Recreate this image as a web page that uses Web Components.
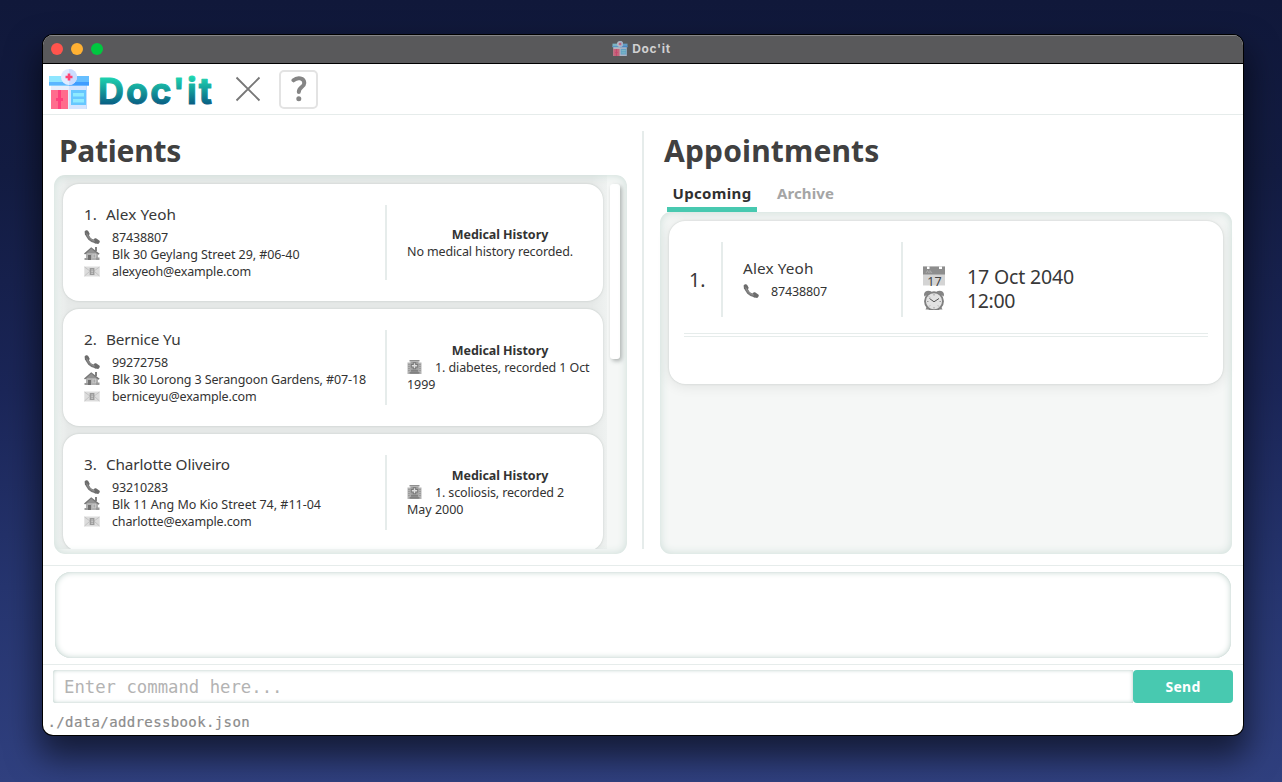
<!DOCTYPE html>
<html lang="en"><head><meta charset="utf-8"><title>Doc'it</title>
<style>
html,body{margin:0;height:100%}
body{box-sizing:border-box;width:1282px;height:782px;overflow:hidden;padding:35px 39px 47px 43px;background:linear-gradient(#10183a 0%,#131c42 22%,#1b2658 50%,#26356f 75%,#30407f 100%);font-family:"Noto Sans","Open Sans",sans-serif;color:#383838}
</style></head><body>
<docit-window></docit-window>
<script>
const define=(name,html,setup)=>{
  const t=document.createElement('template');t.innerHTML=html;
  customElements.define(name,class extends HTMLElement{
    constructor(){super();this.attachShadow({mode:'open'}).append(t.content.cloneNode(true));}
    connectedCallback(){if(setup)setup(this,this.shadowRoot);}
  });
};

// Single line of text tracked to an exact width.
define('fit-text',`<style>:host{display:inline-block;white-space:pre}</style><slot></slot>`,el=>{
  const w=+el.getAttribute('w');
  el.style.letterSpacing='0px';
  const n=[...el.textContent].length,nat=el.getBoundingClientRect().width;
  if(w&&nat)el.style.letterSpacing=((w-nat)/n).toFixed(4)+'px';
});

const icons={
 logo:`<svg viewBox="0 0 40 40"><path fill="#c5dcff" d="M2 10h36v30H20V20z"/><path fill="#e8eefb" d="M2 14h18v26H2z"/><path fill="#d4e4ff" d="M20 14h17v26H20z"/><path fill="#8ee6ff" d="M0 7h20v9.500H0z"/><path fill="#66bfff" d="M20 7h20v9.500H20z"/><path fill="#5bb6ff" d="M0 13h20v3.500H0z"/><path fill="#3f9dff" d="M20 13h20v3.500H20z"/><path fill="#ff6c8d" d="M2 21h17v19H2z"/><path fill="#ff3f7c" d="M9 21h3v19H9zM7 29h7v3H7z"/><path fill="#67c7ff" d="M22 21h15v15H22z"/><path fill="#8eeaff" d="M24 24h11v3.500H24zM24 30h11v3.500H24z"/><circle cx="20" cy="8" r="8" fill="#e1ebff"/><path fill="#cbdcff" d="M20 0a8 8 0 0 1 0 16z"/><path fill="#ff4474" d="M18.700 4.500h2.600v2.200h2.200v2.600h-2.200v2.200h-2.600V9.300h-2.200V6.700h2.200z"/></svg>`,
 phone:`<svg viewBox="0 0 16 14"><path d="M2.600 2.600C3 7 6.500 11 12.300 12" fill="none" stroke="#777" stroke-width="3.200"/><path fill="#6c6c6c" d="M.6 1.600C1.500.3 3.200-.1 4.200.9l1.400 2.600c.2 1-.8 2-2.200 2.200L1 5zM9.400 9.800c.6-1.300 2-1.800 3-1.300l3.200 2.300c.5 1-.1 2.600-1.500 3.100l-3.500-.6z"/><path d="M2.700 3.500C4 7.500 7 10 11 11.200" fill="none" stroke="#999" stroke-width=".8"/></svg>`,
 home:`<svg viewBox="0 0 16 14"><path fill="#808080" d="M11 0h2v4h-2z"/><path fill="#b0b0b0" d="M2 6L8 2l6 4.500V13H2z"/><path fill="#777" d="M7.200.3L0 6.400l1 1L7.500 3l7 4.700 1.200-.9z"/><path fill="#929292" d="M7.200 1.500L3 6h9z"/><path fill="#707070" d="M4 8h3v5H4z"/><path fill="#e0e0e0" d="M8.500 7.500h3.500V10.500H8.500z"/><path stroke="#777" stroke-width=".5" d="M10.200 7.500v3M8.500 9H12"/><path fill="#999" d="M.5 11h3.500V13H.5zM12 10.500h3.500v2.500h-3.500z"/></svg>`,
 mail:`<svg viewBox="0 0 16 11"><path fill="#dcdcdc" d="M.3.500h15.400v10H.3z"/><path fill="none" stroke="#bcbcbc" stroke-width=".8" d="M.5 1L8 6.500 15.500 1M.5 10L5.500 5.500M15.500 10l-5-4.500"/><path fill="#9a9a9a" d="M5.700 2h4.700v7H5.700z"/><path stroke="#ddd" stroke-width=".8" d="M7.200 4h2M7.200 5.700h2M7.200 7.300h2"/></svg>`,
 hospital:`<svg viewBox="0 0 15 14"><path fill="#b2b2b2" d="M.5 2.500h14V14H.5z"/><path fill="#909090" d="M2.500 0h10v1.500h-10z"/><path fill="#a0a0a0" d="M3.500 1.500h8V14h-8z"/><path fill="#777" d="M5.800 2.300h3.400v1.700h2v3.400h-2v1.800H5.800V7.400h-2V4h2z"/><path fill="#ddd" d="M6.800 3.200h1.400v1.800h2v1.400h-2v1.800H6.800V6.400h-2V5h2z"/><path fill="#777" d="M4 10.200h7v1.200H4zM2.500 12.300h10v1.200h-10z"/><path stroke="#858585" stroke-dasharray="1 1" d="M2 4v7M13 4v7"/></svg>`,
 calendar:`<svg viewBox="0 0 22 19"><path fill="#d4d4d4" d="M0 0h22v19H0z"/><path fill="#8d8d8d" d="M0 0h22v8H0z"/><path fill="#fff" d="M4 0h2.500v2.500H4zM16 0h3v2.500h-3z"/><path fill="none" stroke="#b1b1b1" stroke-width=".8" d="M3 6.500L4.500 4 6 6.500M7 6.500V4l2 2.500"/><text x="11.500" y="19" text-anchor="middle" font-family="Noto Sans,sans-serif" font-size="12.500" fill="#444">17</text></svg>`,
 clock:`<svg viewBox="0 0 22 19"><path fill="#858585" d="M1.500 6C-.5 2 4-1.500 8.500 1zM20.500 6c2-4-2.500-7.500-7-5z"/><path fill="#888" d="M4 16l-1.500 3h3zM18 16l1.500 3h-3z"/><circle cx="11" cy="10.800" r="9" fill="#e2e2e2" stroke="#808080" stroke-width="1.900"/><path fill="none" stroke="#555" stroke-width="1" d="M6.500 8L11 11.300 16 8"/><path stroke="#888" stroke-width=".8" d="M11 3.500V5M11 16.500V18M4 11h1.500M16.500 11H18M6 6l1 1M16 16l-1-1M6 16l1-1"/></svg>`,
 close:`<svg viewBox="0 0 26 26"><path fill="none" stroke="#777" stroke-width="1.900" d="M1.500 1.500l23 23M24.500 1.500l-23 23"/></svg>`,
 help:`<svg viewBox="0 0 18 26"><path fill="none" stroke="#858585" stroke-width="4" stroke-linecap="round" d="M3.500 4.300C7.500.8 14.300 1.800 14.300 7 14.300 11.200 8.800 11 8.800 16"/><circle cx="8.800" cy="22.800" r="2.500" fill="#858585"/></svg>`
};
define('ui-icon',`<style>:host{display:block;flex:none}div,svg{display:block;width:100%;height:100%;overflow:hidden}</style><div></div>`,(el,r)=>{r.querySelector('div').innerHTML=icons[el.getAttribute('name')];});

define('title-bar',`<style>
:host{display:grid;grid-template-columns:1fr auto 1fr;align-items:center;height:28px;background:#59595b;border-bottom:1px solid #000;box-sizing:content-box;box-shadow:inset 0 1px #858587}
.dots{display:flex;gap:8px;padding-left:8px}i{width:12px;height:12px;border-radius:50%}
.t{display:flex;align-items:center;gap:4px;font:bold 12px/16px Inter,sans-serif;color:#d0d0d1;padding:0 3px 1px 0}ui-icon{width:16px;height:15px;opacity:.65}
</style><div class="dots"><i style="background:#ff544d"></i><i style="background:#ffb133"></i><i style="background:#00c840"></i></div><div class="t"><ui-icon name="logo"></ui-icon><fit-text w="38.5">Doc'it</fit-text></div>`);

define('app-header',`<style>
:host{display:flex;align-items:center;height:50px;border-bottom:1px solid #e6eceb;padding-left:6px}
.logo{width:40px;height:40px}.word{width:120px;height:46px;margin-left:6px}.word svg{display:block;overflow:visible}
.x{width:26px;height:26px;margin-left:20px}
.q{border:2px solid #e3e3e3;border-radius:5px;margin-left:18px;box-sizing:border-box;width:39px;height:39px;display:grid;place-items:center}
.q ui-icon{width:18px;height:26px}
</style><ui-icon class="logo" name="logo"></ui-icon><div class="word"><svg width="120" height="46"><defs><linearGradient id="g" gradientUnits="userSpaceOnUse" x1="0" y1="9" x2="0" y2="39"><stop offset="0" stop-color="#20deb3"/><stop offset="1" stop-color="#085b82"/></linearGradient></defs><text x="3" y="38" textLength="114" lengthAdjust="spacing" font-family="Inter,sans-serif" font-weight="700" font-size="36" fill="url(#g)" stroke="url(#g)" stroke-width="1" stroke-linejoin="round">Doc'it</text></svg></div>
<ui-icon class="x" name="close"></ui-icon><div class="q"><ui-icon name="help"></ui-icon></div>`);

define('info-row',`<style>
:host{display:flex;align-items:center;height:17px;font-size:12.5px;line-height:17px;color:#333}
.i{width:28px;flex:none}ui-icon{width:16px;height:14px;margin-bottom:2px}ui-icon[name=mail]{height:11px;margin-bottom:0}
</style><div class="i"></div><slot></slot>`,(el,r)=>{r.querySelector('.i').innerHTML=`<ui-icon name="${el.getAttribute('icon')}"></ui-icon>`;});

define('patient-card',`<style>
:host{display:flex;box-sizing:border-box;height:117px;flex:none;padding:21px 10px 21px 21px;background:#fff;border-radius:16px;box-shadow:0 0 2px rgba(60,80,75,.22),0 1px 8px rgba(0,0,0,.03)}
.l{width:301px;height:75px;border-right:2px solid #e6eceb}
.r{flex:1;height:75px;padding-left:20px;display:flex;flex-direction:column;justify-content:center;font-size:12.5px;line-height:17px;color:#333}
</style><div class="l"><slot></slot></div><div class="r"><slot name="history"></slot></div>`);

define('patient-list',`<style>
:host{position:relative;display:flex;gap:3px;box-sizing:border-box;height:379px;border-radius:11px;background:#f5f7f6;overflow:hidden}
:host::after{content:"";position:absolute;inset:0;border-radius:11px;box-shadow:inset 0 0 10px #cbdcd7;clip-path:polygon(0 0,100% 0,100% 100%,0 100%,0 370px,549px 370px,549px 9px,9px 9px,9px 370px,0 370px)}
.list{box-sizing:border-box;width:553px;padding:9px 0 0 9px;height:374px;overflow:hidden;display:flex;flex-direction:column;gap:8px;background:linear-gradient(90deg,#f3f6f5 0,#e7eae9 14px,#e7eae9 538px,#eff2f1 553px)}
patient-card{width:540px}
.name{display:flex;font-size:15.300px;line-height:19px;height:19px;margin-bottom:5px}.n{width:22px}
b{display:block;text-align:center}.h{display:flex;align-items:center;gap:13px;height:17px}.h ui-icon{width:15px;height:14px;margin-bottom:2px}
.thumb{width:10px;height:175px;margin-top:9px;border-radius:3px;background:#fff;box-shadow:2px 2px 4px rgba(60,70,68,.4)}
</style><div class="list"></div><div class="thumb"></div>`,(el,r)=>{
 const f=(s,w)=>`<fit-text w="${w}">${s}</fit-text>`;
 const data=[
  ['1.','Alex Yeoh',70,'87438807',56,'Blk 30 Geylang Street 29, #06-40',187.500,'alexyeoh@example.com',139,`<div>${f('No medical history recorded.',166)}</div>`],
  ['2.','Bernice Yu',74.500,'99272758',56,'Blk 30 Lorong 3 Serangoon Gardens, #07-18',254,'berniceyu@example.com',144.500,`<div class="h"><ui-icon name="hospital"></ui-icon>${f('1. diabetes, recorded 1 Oct',154.500)}</div><div>${f('1999',28.500)}</div>`],
  ['3.','Charlotte Oliveiro',124,'93210283',56,'Blk 11 Ang Mo Kio Street 74, #11-04',209,'charlotte@example.com',139.500,`<div class="h"><ui-icon name="hospital"></ui-icon>${f('1. scoliosis, recorded 2',129)}</div><div>${f('May 2000',56.500)}</div>`]];
 r.querySelector('.list').innerHTML=data.map(d=>`<patient-card><div class="name"><span class="n">${d[0]}</span>${f(d[1],d[2])}</div>
 <info-row icon="phone">${f(d[3],d[4])}</info-row><info-row icon="home">${f(d[5],d[6])}</info-row><info-row icon="mail">${f(d[7],d[8])}</info-row>
 <b slot="history">${f('Medical History',96.500)}</b><div slot="history">${d[9]}</div></patient-card>`).join('');
});

define('appointment-list',`<style>
:host{display:block;box-sizing:border-box;height:342px;padding:9px;border-radius:11px;background:#f5f7f6;box-shadow:inset 0 0 10px #cbdcd7}
.card{box-sizing:border-box;height:163px;padding:21px 15px 0;border-radius:16px;background:#fff;box-shadow:0 0 2px rgba(60,80,75,.22),0 2px 14px rgba(0,0,0,.09)}
.row{display:flex;height:75px}.num{width:37px;border-right:2px solid #e6eceb;font-size:19.500px;line-height:76px;text-indent:5px}
.who{width:158px;padding:17px 0 0 20px;border-right:2px solid #e6eceb;height:58px}.name{font-size:15.300px;line-height:19px;height:19px;margin-bottom:5px}
.when{padding:23px 0 0 20px;font-size:19.500px;line-height:24px}.when div{display:flex;align-items:center;gap:22px;height:24px}.when ui-icon{width:22px;height:20px;margin-top:-3px}
.dbl{height:2px;border:solid #e6eceb;border-width:1px 0;margin-top:16px}
</style><div class="card"><div class="row"><div class="num">1.</div><div class="who"><div class="name"><fit-text w="70.5">Alex Yeoh</fit-text></div><info-row icon="phone"><fit-text w="56">87438807</fit-text></info-row></div><div class="when"><div><ui-icon name="calendar"></ui-icon><fit-text w="107">17 Oct 2040</fit-text></div><div><ui-icon name="clock"></ui-icon><fit-text w="48">12:00</fit-text></div></div></div><div class="dbl"></div></div>`);

define('tab-bar',`<style>
:host{display:flex;gap:20px;font-size:15px;font-weight:700;line-height:18px;height:28px;margin-left:7px}
div{box-sizing:border-box;height:28px}.a{width:90px;padding-left:5.500px;border-bottom:5px solid #48c9b0;border-radius:2px 2px 0 0;color:#303030}.b{color:#a5a5a5}
</style><div class="a"><fit-text w="79">Upcoming</fit-text></div><div class="b"><fit-text w="57">Archive</fit-text></div>`);

define('section-title',`<style>:host{display:block;font-size:30px;line-height:40px;height:40px;font-weight:700;color:#404040}</style><slot></slot>`);

define('main-body',`<style>
:host{display:flex;height:450px;border-bottom:1px solid #e6eceb}
.p{width:573px;padding:16px 15px 0 11px}.p section-title{padding-left:5px;margin-bottom:4px}
.d{width:2px;height:418px;margin-top:16px;background:#e6eceb}
.a{width:572px;padding:16px 0 0 16px}.a section-title{padding-left:4px;margin-bottom:-2px}
.tabs{height:43px;display:flex;align-items:flex-end}
</style><div class="p"><section-title><fit-text w="122">Patients</fit-text></section-title><patient-list></patient-list></div><div class="d"></div><div class="a"><section-title><fit-text w="215.5">Appointments</fit-text></section-title><div class="tabs"><tab-bar></tab-bar></div><appointment-list></appointment-list></div>`);

define('result-panel',`<style>:host{display:block;box-sizing:border-box;height:99px;padding:6px 12px;border-bottom:1px solid #e6eceb}div{height:86px;border-radius:16px;box-shadow:inset 0 0 6px #bdd0cb,inset 0 0 1px #b8cbc6}</style><div></div>`);

define('command-bar',`<style>
:host{display:flex;height:33px;padding:5px 10px 0}
.in{flex:1;border-radius:3px 0 0 3px;box-shadow:inset 0 0 4px #bdd0cb,inset 0 0 1px #b8cbc6;padding-left:11px;font:17.300px/35px "DejaVu Sans Mono",monospace;height:33px;color:#b3b3b3}
.s{width:100px;border-radius:4px;background:#48c9b0;color:#fff;font-weight:700;font-size:14px;line-height:33px;text-align:center}
</style><div class="in"><fit-text w="218.500">Enter command here...</fit-text></div><div class="s"><fit-text w="35">Send</fit-text></div>`);

define('status-bar',`<style>:host{display:block;padding:9px 0 0 4.500px;font:14px/20px "DejaVu Sans Mono",monospace;color:#8c8c8c}fit-text{-webkit-text-stroke:.2px}</style><fit-text w="202.5">./data/addressbook.json</fit-text>`);

define('docit-window',`<style>
:host{display:block;width:1200px;height:700px;background:#fff;border-radius:10px;overflow:hidden;box-shadow:0 0 0 1px #000,0 18px 32px 4px rgba(0,0,0,.55)}
</style><title-bar></title-bar><app-header></app-header><main-body></main-body><result-panel></result-panel><command-bar></command-bar><status-bar></status-bar>`);
</script></body></html>
